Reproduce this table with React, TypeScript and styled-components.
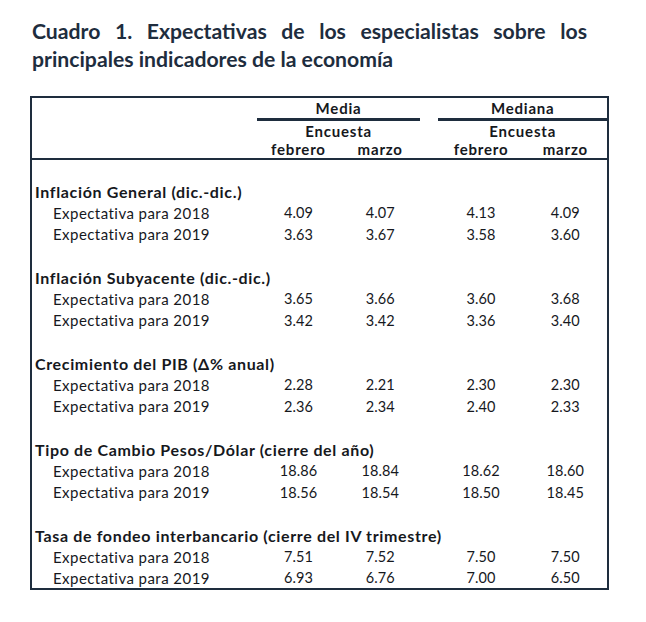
import React from 'react';
import styled, { createGlobalStyle } from 'styled-components';

const GlobalStyle = createGlobalStyle`
  html, body {
    margin: 0;
    padding: 0;
    background: #ffffff;
  }
  body {
    font-family: Lato, "Open Sans", "Liberation Sans", sans-serif;
    color: #16181d;
  }
`;

const NAVY = '#1e2d3e';

const Page = styled.div`
  width: 646px;
  height: 622px;
  padding: 17px 0 0 30px;
  box-sizing: border-box;
`;

const Title = styled.h1`
  width: 555px;
  margin: 0 0 0 2px;
  font-size: 21.2px;
  line-height: 28px;
  font-weight: 700;
  color: ${NAVY};
  text-align: justify;
  text-align-last: left;
`;

const Table = styled.table`
  margin-top: 23px;
  width: 579px;
  border-collapse: collapse;
  border: 2px solid ${NAVY};
  table-layout: fixed;
`;

const HeadCell = styled.th<{ $underline?: boolean; $h: number }>`
  height: ${p => p.$h}px;
  padding: 0;
  font-size: 15px;
  letter-spacing: 0.8px;
  font-weight: 700;
  text-align: center;
  vertical-align: middle;
  border-bottom: ${p => (p.$underline ? `3px solid ${NAVY}` : 'none')};
`;

const Thead = styled.thead`
  border-bottom: 2px solid ${NAVY};
`;

const Row = styled.tr`
  height: 21.5px;
`;

const SectionCell = styled.td`
  padding: 0 0 0 3px;
  font-size: 16px;
  letter-spacing: 0.65px;
  font-weight: 700;
  white-space: nowrap;
  vertical-align: middle;
`;

const LabelCell = styled.td`
  padding: 0 0 0 21px;
  font-size: 15px;
  letter-spacing: 0.45px;
  white-space: nowrap;
  vertical-align: middle;
`;

const NumCell = styled.td`
  padding: 0;
  font-size: 14.5px;
  letter-spacing: 0.1px;
  text-align: center;
  vertical-align: middle;
`;

type Section = {
  title: string;
  rows: { label: string; values: string[] }[];
};

const sections: Section[] = [
  {
    title: 'Inflación General (dic.-dic.)',
    rows: [
      { label: 'Expectativa para 2018', values: ['4.09', '4.07', '4.13', '4.09'] },
      { label: 'Expectativa para 2019', values: ['3.63', '3.67', '3.58', '3.60'] },
    ],
  },
  {
    title: 'Inflación Subyacente (dic.-dic.)',
    rows: [
      { label: 'Expectativa para 2018', values: ['3.65', '3.66', '3.60', '3.68'] },
      { label: 'Expectativa para 2019', values: ['3.42', '3.42', '3.36', '3.40'] },
    ],
  },
  {
    title: 'Crecimiento del PIB (Δ% anual)',
    rows: [
      { label: 'Expectativa para 2018', values: ['2.28', '2.21', '2.30', '2.30'] },
      { label: 'Expectativa para 2019', values: ['2.36', '2.34', '2.40', '2.33'] },
    ],
  },
  {
    title: 'Tipo de Cambio Pesos/Dólar (cierre del año)',
    rows: [
      { label: 'Expectativa para 2018', values: ['18.86', '18.84', '18.62', '18.60'] },
      { label: 'Expectativa para 2019', values: ['18.56', '18.54', '18.50', '18.45'] },
    ],
  },
  {
    title: 'Tasa de fondeo interbancario (cierre del IV trimestre)',
    rows: [
      { label: 'Expectativa para 2018', values: ['7.51', '7.52', '7.50', '7.50'] },
      { label: 'Expectativa para 2019', values: ['6.93', '6.76', '7.00', '6.50'] },
    ],
  },
];

// data columns sit either side of an empty spacer column
const cellsWithGap = (values: string[]) => [
  <NumCell key="a">{values[0]}</NumCell>,
  <NumCell key="b">{values[1]}</NumCell>,
  <NumCell key="gap" />,
  <NumCell key="c">{values[2]}</NumCell>,
  <NumCell key="d">{values[3]}</NumCell>,
];

export default function App() {
  return (
    <>
      <GlobalStyle />
      <Page>
        <Title>
          Cuadro 1. Expectativas de los especialistas sobre los principales indicadores de la economía
        </Title>
        <Table>
          <colgroup>
            <col style={{ width: 225 }} />
            <col style={{ width: 83 }} />
            <col style={{ width: 80 }} />
            <col style={{ width: 18 }} />
            <col style={{ width: 85 }} />
            <col style={{ width: 84 }} />
          </colgroup>
          <Thead>
            <tr>
              <HeadCell $h={20} />
              <HeadCell $h={20} colSpan={2} $underline>Media</HeadCell>
              <HeadCell $h={20} />
              <HeadCell $h={20} colSpan={2} $underline>Mediana</HeadCell>
            </tr>
            <tr>
              <HeadCell $h={19} />
              <HeadCell $h={19} colSpan={2}>Encuesta</HeadCell>
              <HeadCell $h={19} />
              <HeadCell $h={19} colSpan={2}>Encuesta</HeadCell>
            </tr>
            <tr>
              <HeadCell $h={17} />
              <HeadCell $h={17}>febrero</HeadCell>
              <HeadCell $h={17}>marzo</HeadCell>
              <HeadCell $h={17} />
              <HeadCell $h={17}>febrero</HeadCell>
              <HeadCell $h={17}>marzo</HeadCell>
            </tr>
          </Thead>
          <tbody>
            {sections.map(section => (
              <React.Fragment key={section.title}>
                <Row>
                  <td colSpan={6} />
                </Row>
                <Row>
                  <SectionCell colSpan={6}>{section.title}</SectionCell>
                </Row>
                {section.rows.map(row => (
                  <Row key={row.label}>
                    <LabelCell>{row.label}</LabelCell>
                    {cellsWithGap(row.values)}
                  </Row>
                ))}
              </React.Fragment>
            ))}
          </tbody>
        </Table>
      </Page>
    </>
  );
}
